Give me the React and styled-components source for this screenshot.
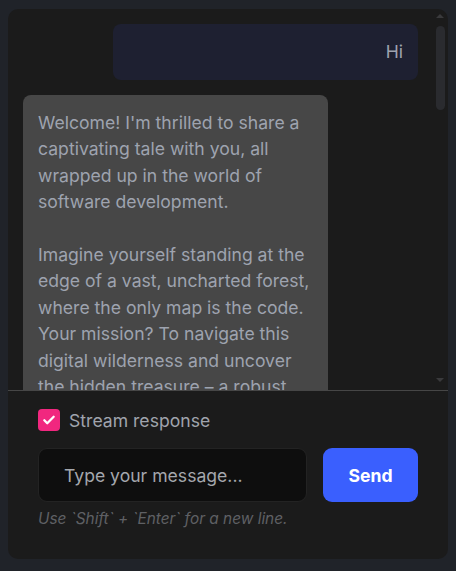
import React from "react";
import styled, { createGlobalStyle } from "styled-components";

const Global = createGlobalStyle`
  html, body { margin: 0; padding: 0; background: #202329; }
  body { font-family: Inter, "Noto Sans", sans-serif; font-size: 17.6px; }
  * { box-sizing: border-box; }
`;

const Page = styled.div`
  padding: 9px 8px 12px 8px;
  height: 571px;
`;

const Card = styled.div`
  height: 550px;
  background: #1b1b1b;
  border-radius: 10px;
  display: flex;
  flex-direction: column;
  overflow: hidden;
`;

const ScrollArea = styled.div`
  height: 382px;
  flex: none;
  display: flex;
  border-bottom: 1px solid #464646;
`;

const Messages = styled.div`
  flex: 1;
  min-width: 0;
  overflow-y: auto;
  scrollbar-width: none;
  padding: 15px;
  display: flex;
  flex-direction: column;
  gap: 14.6px;
`;

const ScrollTrack = styled.div`
  width: 15px;
  flex: none;
  display: flex;
  flex-direction: column;
  align-items: center;
  padding: 5px 0 8px 0;
`;

const Arrow = styled.span`
  width: 0;
  height: 0;
  border-left: 4px solid transparent;
  border-right: 4px solid transparent;
  ${(p) =>
    p.$down
      ? "border-top: 4px solid #3a3a3c; margin-top: auto;"
      : "border-bottom: 4px solid #3a3a3c;"}
  margin-left: -1px;
`;

const Thumb = styled.span`
  width: 9px;
  height: 84px;
  margin-top: 8px;
  margin-left: -1px;
  border-radius: 5px;
  background: #2a2b2f;
`;

const Bubble = styled.div`
  width: 305px;
  flex: none;
  align-self: ${(p) => (p.$user ? "flex-end" : "flex-start")};
  background: ${(p) => (p.$user ? "#1e2031" : "#474747")};
  color: #9ea3af;
  border-radius: 8px;
  padding: 15px;
  font-size: 17.6px;
  line-height: 26.4px;
  text-align: ${(p) => (p.$user ? "right" : "left")};
  white-space: pre-wrap;
`;

const Footer = styled.div`
  padding: 17px 30px 0 30px;
  display: flex;
  flex-direction: column;
`;

const CheckRow = styled.label`
  display: flex;
  align-items: center;
  gap: 9px;
  color: #a0a4ad;
  font-size: 17.6px;
  height: 24px;
`;

const Box = styled.span`
  width: 22px;
  height: 22px;
  border-radius: 4px;
  background: #f1277f;
  display: flex;
  align-items: center;
  justify-content: center;
`;

const InputRow = styled.div`
  display: flex;
  gap: 16px;
  margin-top: 16px;
`;

const Input = styled.div`
  flex: 1;
  height: 54px;
  background: #0e0e0e;
  border: 1px solid #232323;
  border-radius: 9px;
  display: flex;
  align-items: center;
  padding-left: 25px;
  color: #a4a7ad;
  font-size: 17.6px;
`;

const SendButton = styled.button`
  width: 95px;
  height: 54px;
  border: none;
  border-radius: 9px;
  background: #3a5ffe;
  color: #ffffff;
  font-family: Inter, sans-serif;
  font-weight: 700;
  font-size: 17.6px;
`;

const Hint = styled.div`
  margin-top: 7px;
  font-style: italic;
  font-size: 15.4px;
  color: #5f6064;
`;

const story = `Welcome! I'm thrilled to share a captivating tale with you, all wrapped up in the world of software development.

Imagine yourself standing at the edge of a vast, uncharted forest, where the only map is the code. Your mission? To navigate this digital wilderness and uncover the hidden treasure – a robust, elegant application that will change the way people work.

As you take your first steps, you notice the trees are made of functions and the paths are paved with variables. Each branch you follow leads to a new module, and every module hides a secret waiting to be discovered.

Along the way, you meet a wise old debugger who offers you a lantern. "Use this," she says, "to shine light on the bugs that lurk in the shadows." With her gift in hand, you press deeper into the forest, fixing broken bridges and clearing tangled loops.

Days turn into sprints, and sprints turn into releases. Your team grows, and together you build a village of tests that protects everything you have made. Finally, at the heart of the forest, you find the treasure: not gold, but a product that your users love.

And that, dear friend, is the true reward of software development.`;

function Check() {
  return (
    <svg width="14" height="14" viewBox="0 0 24 24" fill="none">
      <path d="M4 12.5l5 5L20 6.5" stroke="#fff" strokeWidth="4" strokeLinecap="round" strokeLinejoin="round" />
    </svg>
  );
}

export default function App() {
  return (
    <>
      <Global />
      <Page>
        <Card>
          <ScrollArea>
            <Messages>
              <Bubble $user>Hi</Bubble>
              <Bubble>{story}</Bubble>
            </Messages>
            <ScrollTrack>
              <Arrow />
              <Thumb />
              <Arrow $down />
            </ScrollTrack>
          </ScrollArea>
          <Footer>
            <CheckRow>
              <Box>
                <Check />
              </Box>
              Stream response
            </CheckRow>
            <InputRow>
              <Input>Type your message...</Input>
              <SendButton>Send</SendButton>
            </InputRow>
            <Hint>Use `Shift` + `Enter` for a new line.</Hint>
          </Footer>
        </Card>
      </Page>
    </>
  );
}
